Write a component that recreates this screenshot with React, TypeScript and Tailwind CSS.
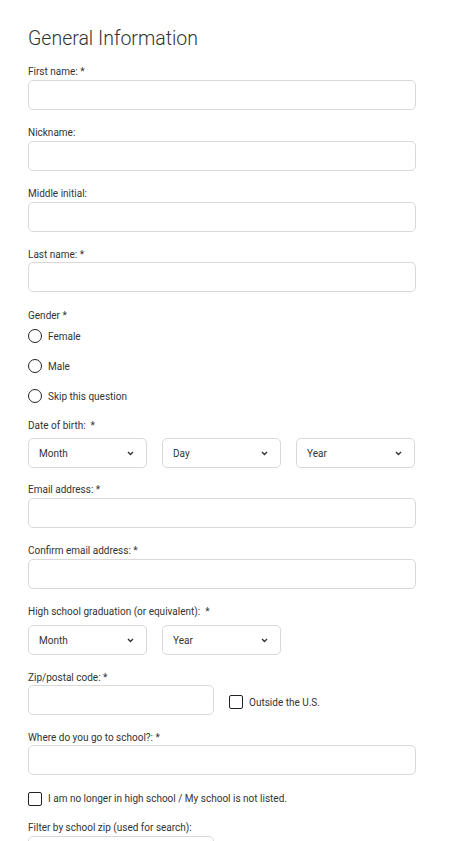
import React from 'react'

const font = { fontFamily: 'Roboto, "Noto Sans", Arial, sans-serif' }

function Label({ children, className = '' }: { children: React.ReactNode; className?: string }){
  return <div className={`text-[10px] leading-[12px] text-[#333] ${className}`}>{children}</div>
}

function TextField({ label, width = 'w-full' }: { label: string; width?: string }){
  return (
    <div className="mb-[17px]">
      <Label className="mb-[2px]">{label}</Label>
      <input className={`${width} h-[30px] border border-[#d9d9d9] rounded-[5px] px-2 text-[10px] outline-none`} />
    </div>
  )
}

function Chevron(){
  return (
    <svg width="7" height="5" viewBox="0 0 7 5" className="absolute right-[13px] top-[13px] pointer-events-none">
      <path d="M1 1 L3.5 3.5 L6 1" fill="none" stroke="#333" strokeWidth="1.4" />
    </svg>
  )
}

function Select({ placeholder }: { placeholder: string }){
  return (
    <div className="relative w-[119px]">
      <select className="appearance-none w-full h-[30px] border border-[#d9d9d9] rounded-[5px] pl-[10px] text-[10px] text-[#333] bg-white outline-none">
        <option>{placeholder}</option>
      </select>
      <Chevron />
    </div>
  )
}

function Radio({ label }: { label: string }){
  return (
    <label className="flex items-center h-[20px] mb-[10px] last:mb-0">
      <span className="w-[14px] h-[14px] rounded-full border-[1.3px] border-[#222] mr-[6px]" />
      <span className="text-[10px] text-[#333]">{label}</span>
    </label>
  )
}

function Checkbox({ label }: { label: string }){
  return (
    <label className="flex items-center">
      <span className="w-[14px] h-[14px] rounded-[2px] border-[1.3px] border-[#222] mr-[6px]" />
      <span className="text-[10px] text-[#333]">{label}</span>
    </label>
  )
}

export default function App(){
  return (
    <div className="min-h-[841px] bg-white" style={font}>
      <div className="ml-[28px] w-[388px] pt-[26px]">
        <h1 className="text-[19.5px] leading-[26px] font-light text-[#333] mb-[14px]">General Information</h1>

        <TextField label="First name: *" />
        <TextField label="Nickname:" />
        <TextField label="Middle initial:" />
        <div className="mb-[18px]">
          <Label className="mb-[1px]">Last name: *</Label>
          <input className="w-full h-[30px] border border-[#d9d9d9] rounded-[5px] px-2 text-[10px] outline-none" />
        </div>

        <div className="mb-[14px]">
          <Label className="mb-[4px]">Gender *</Label>
          <div className="flex flex-col">
            <Radio label="Female" />
            <Radio label="Male" />
            <Radio label="Skip this question" />
          </div>
        </div>

        <div className="mb-[16px]">
          <Label className="mb-[6px]">Date of birth:&nbsp; *</Label>
          <div className="flex gap-[15px]">
            <Select placeholder="Month" />
            <Select placeholder="Day" />
            <Select placeholder="Year" />
          </div>
        </div>

        <TextField label="Email address: *" />
        <TextField label="Confirm email address: *" />

        <div className="mb-[17px]">
          <Label className="mb-[7px]">High school graduation (or equivalent):&nbsp; *</Label>
          <div className="flex gap-[15px]">
            <Select placeholder="Month" />
            <Select placeholder="Year" />
          </div>
        </div>

        <div className="mb-[17px]">
          <Label className="mb-[1px]">Zip/postal code: *</Label>
          <div className="flex items-center">
            <input className="w-[186px] h-[30px] border border-[#d9d9d9] rounded-[5px] px-2 text-[10px] outline-none mr-[15px]" />
            <div className="mt-[4px]"><Checkbox label="Outside the U.S." /></div>
          </div>
        </div>

        <div className="mb-[16px]">
          <Label className="mb-[1px]">Where do you go to school?: *</Label>
          <input className="w-full h-[30px] border border-[#d9d9d9] rounded-[5px] px-2 text-[10px] outline-none" />
        </div>

        <div className="mb-[16px]">
          <Checkbox label="I am no longer in high school / My school is not listed." />
        </div>

        <div>
          <Label className="mb-[2px]">Filter by school zip (used for search):</Label>
          <input className="w-[186px] h-[30px] border border-[#d9d9d9] rounded-[5px] px-2 text-[10px] outline-none" />
        </div>
      </div>
    </div>
  )
}
